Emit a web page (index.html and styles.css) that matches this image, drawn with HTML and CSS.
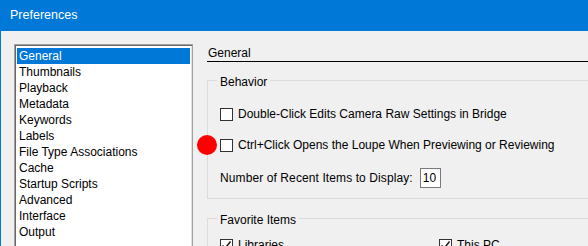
FILE: index.html
```html
<!DOCTYPE html>
<html>
<head>
<meta charset="utf-8">
<link rel="stylesheet" href="styles.css">
</head>
<body>
<div class="window">
  <div class="titlebar">Preferences</div>
  <div class="content">
    <ul class="listbox">
      <li class="selected">General</li>
      <li>Thumbnails</li>
      <li>Playback</li>
      <li>Metadata</li>
      <li>Keywords</li>
      <li>Labels</li>
      <li>File Type Associations</li>
      <li>Cache</li>
      <li>Startup Scripts</li>
      <li>Advanced</li>
      <li>Interface</li>
      <li>Output</li>
    </ul>
    <div class="panel">
      <div class="panel-title">General</div>
      <fieldset class="group group-behavior">
        <legend>Behavior</legend>
        <div class="group-body">
          <label class="check-row"><span class="box"></span>Double-Click Edits Camera Raw Settings in Bridge</label>
          <label class="check-row marked"><span class="dot"></span><span class="box"></span>Ctrl+Click Opens the Loupe When Previewing or Reviewing</label>
          <div class="number-row">Number of Recent Items to Display:<span class="numbox">10</span></div>
        </div>
      </fieldset>
      <fieldset class="group group-fav">
        <legend>Favorite Items</legend>
        <div class="group-body fav-grid">
          <label class="check-row"><span class="box checked"><svg viewBox="0 0 13 13" width="13" height="13"><path d="M2.5 6.5 L5 9.5 L10.5 2.5" fill="none" stroke="#222" stroke-width="1.6"/></svg></span>Libraries</label>
          <label class="check-row"><span class="box checked"><svg viewBox="0 0 13 13" width="13" height="13"><path d="M2.5 6.5 L5 9.5 L10.5 2.5" fill="none" stroke="#222" stroke-width="1.6"/></svg></span>This PC</label>
        </div>
      </fieldset>
    </div>
  </div>
</div>
</body>
</html>
```
FILE: styles.css
```css
html, body {
  margin: 0;
  padding: 0;
}
body {
  width: 588px;
  height: 246px;
  overflow: hidden;
  background: #f0f0f0;
  font-family: "Liberation Sans", Arial, sans-serif;
  font-size: 12px;
  color: #000;
}
.window {
  height: 246px;
  border-left: 1px solid #0078d7;
  box-sizing: border-box;
  display: flex;
  flex-direction: column;
}
.titlebar {
  height: 31px;
  background: #0078d7;
  color: #fff;
  font-size: 12.5px;
  line-height: 31px;
  padding-left: 9px;
  flex: none;
}
.content {
  display: flex;
  padding-left: 13px;
  flex: 1;
  min-height: 0;
}
.listbox {
  list-style: none;
  margin: 13px 0 0 0;
  padding: 3px 2px 1px 2px;
  width: 173px;
  height: 220px;
  background: #fff;
  border: 1px solid #a0a0a0;
  box-shadow: inset 1px 1px 0 #696969, inset -1px 0 0 #e3e3e3;
  flex: none;
}
.listbox li {
  height: 16px;
  line-height: 16px;
  padding-left: 2px;
  white-space: nowrap;
}
.listbox li.selected {
  background: #0078d7;
  color: #fff;
}
.panel {
  margin-left: 14px;
  padding-top: 14px;
  flex: 1;
  min-width: 0;
}
.panel-title {
  height: 16px;
  line-height: 16px;
  padding-left: 1px;
  border-bottom: 1px solid #000;
  margin-right: -20px;
}
.group {
  margin: 8px -20px 0 0;
  padding: 0 0 10px 9px;
  border: 1px solid #dcdcdc;
  min-width: 0;
}
.group legend {
  padding: 4px 3px 0 3px;
  line-height: 16px;
}
.group-body {
  padding-left: 3px;
}
.check-row {
  display: flex;
  align-items: center;
  height: 16px;
  line-height: 16px;
  margin-top: 15px;
  position: relative;
  white-space: nowrap;
}
.group-behavior .check-row:first-child {
  margin-top: 16px;
}
.box {
  width: 13px;
  height: 13px;
  box-sizing: border-box;
  border: 1px solid #333;
  background: #fff;
  margin-right: 5px;
  flex: none;
  position: relative;
}
.box svg {
  position: absolute;
  left: -1px;
  top: -1px;
}
.dot {
  position: absolute;
  left: -23px;
  top: -2px;
  width: 20px;
  height: 20px;
  border-radius: 50%;
  background: #ff0000;
}
.number-row {
  display: flex;
  align-items: center;
  height: 20px;
  margin-top: 15px;
  white-space: nowrap;
  letter-spacing: 0.1px;
}
.numbox {
  margin-left: 7px;
  width: 21px;
  height: 20px;
  box-sizing: border-box;
  border: 1px solid #7a7a7a;
  background: #fff;
  line-height: 18px;
  padding-left: 2px;
  letter-spacing: 0;
}
.group-fav {
  margin-top: 9px;
}
.fav-grid {
  display: grid;
  grid-template-columns: 219px auto;
}
.fav-grid .check-row {
  margin-top: 9px;
}
```
